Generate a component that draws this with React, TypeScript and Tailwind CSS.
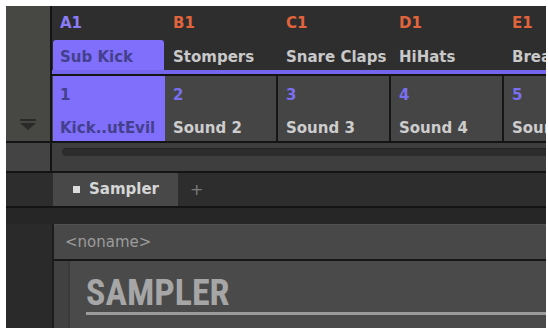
import React from "react"

const groups = [
  { letter: "A1", name: "Sub Kick", selected: true },
  { letter: "B1", name: "Stompers" },
  { letter: "C1", name: "Snare Claps" },
  { letter: "D1", name: "HiHats" },
  { letter: "E1", name: "Breaks" },
]

const sounds = [
  { num: "1", name: "Kick..utEvil", selected: true },
  { num: "2", name: "Sound 2" },
  { num: "3", name: "Sound 3" },
  { num: "4", name: "Sound 4" },
  { num: "5", name: "Sound 5" },
]

const ui = { fontFamily: '"DejaVu Sans", Verdana, sans-serif' }

export default function App() {
  return (
    <div className="min-h-screen bg-white pt-[6px] pl-[6px]" style={ui}>
      <div className="w-[540px] h-[322px] overflow-hidden flex flex-col bg-[#262626]">
        {/* Group + sound area */}
        <div className="flex h-[165px] shrink-0">
          {/* left strip */}
          <div className="w-[44px] shrink-0 flex flex-col">
            <div className="h-[135px] bg-[#474743] flex items-end justify-center pb-[10px]">
              <svg width="18" height="12" viewBox="0 0 18 12">
                <rect x="1" y="0" width="16" height="2" fill="#2a2a2a" />
                <path d="M1 4 H17 L9 11 Z" fill="#2a2a2a" />
              </svg>
            </div>
            <div className="h-[2px] bg-[#141414]" />
            <div className="flex-1 bg-[#444444]" />
          </div>
          <div className="w-[2px] shrink-0 bg-[#141414]" />

          <div className="flex-1 flex flex-col overflow-hidden">
            {/* groups */}
            <div className="h-[64px] bg-[#2e2e2e] flex pl-[1px]">
              {groups.map((g) => (
                <div key={g.letter} className="w-[113px] shrink-0 flex flex-col">
                  <div
                    className={`h-[34px] pl-[7px] pt-[10px] text-[15px] font-bold leading-none ${
                      g.selected ? "text-[#8a7cf6]" : "text-[#e2643c]"
                    }`}
                  >
                    {g.letter}
                  </div>
                  <div
                    className={`h-[30px] pl-[7px] pt-[10px] text-[15px] font-bold leading-none whitespace-nowrap ${
                      g.selected
                        ? "w-[111px] bg-[#7f6ffa] text-[#44408e] rounded-t-[3px]"
                        : "text-[#c9c9c9]"
                    }`}
                  >
                    {g.name}
                  </div>
                </div>
              ))}
            </div>
            <div className="h-[4px] bg-[#7566ee]" />
            <div className="h-[2px] bg-[#141414]" />

            {/* sounds */}
            <div className="h-[65px] flex pl-[1px] bg-[#454545]">
              {sounds.map((s) => (
                <div
                  key={s.num}
                  className={`shrink-0 flex flex-col pt-[12px] ${
                    s.selected
                      ? "w-[112px] bg-[#7f6ffa] pl-[7px]"
                      : "w-[113px] pl-[8px] border-r-2 border-[#161616]"
                  }`}
                >
                  <div
                    className={`text-[15px] font-bold leading-none ${
                      s.selected ? "text-[#44408e]" : "text-[#7a6ff0]"
                    }`}
                  >
                    {s.num}
                  </div>
                  <div
                    className={`mt-[18px] text-[15px] font-bold leading-none whitespace-nowrap ${
                      s.selected ? "text-[#44408e]" : "text-[#cdcdcd]"
                    }`}
                  >
                    {s.name}
                  </div>
                </div>
              ))}
            </div>
            <div className="h-[2px] bg-[#141414]" />

            {/* scroll bar */}
            <div className="flex-1 bg-[#3e3e3e] pt-[5px] pl-[10px]">
              <div className="h-[8px] rounded-l-[4px] bg-[#2c2c2c] border-t border-[#242424]" />
            </div>
          </div>
        </div>
        <div className="h-[2px] shrink-0 bg-[#141414]" />

        {/* tabs */}
        <div className="h-[33px] shrink-0 bg-[#2d2d2d] flex">
          <div className="w-[47px] shrink-0" />
          <div className="w-[125px] shrink-0 bg-[#484848] flex items-center pl-[20px]">
            <div className="w-[7px] h-[7px] bg-[#dcdcdc]" />
            <span className="ml-[9px] text-[15px] font-bold leading-none text-[#d6d6d6]">Sampler</span>
          </div>
          <div className="flex items-center pl-[12px] text-[16px] leading-none text-[#7c7c7c]">+</div>
        </div>
        <div className="h-[2px] shrink-0 bg-[#141414]" />
        <div className="h-[16px] shrink-0 bg-[#262626]" />

        {/* plugin area */}
        <div className="flex-1 flex">
          <div className="w-[46px] shrink-0 bg-[#2a2a2a]" />
          <div className="w-[2px] shrink-0 bg-[#1c1c1c]" />
          <div className="flex-1 flex flex-col">
            <div className="h-[35px] shrink-0 bg-[#484848] border-t border-[#525252] flex items-center pl-[11px]">
              <span className="text-[15px] leading-none text-[#9c9c9c]">&lt;noname&gt;</span>
            </div>
            <div className="h-[2px] shrink-0 bg-[#161616]" />
            <div className="flex-1 flex">
              <div className="w-[16px] shrink-0 bg-[#414141] border-r-2 border-[#3a3a3a]" />
              <div className="flex-1 bg-[#4a4a4a] pt-[14px] pl-[16px]">
                <div
                  className="text-[36px] font-bold leading-none text-[#a6a6a6]"
                  style={{ fontFamily: '"Liberation Sans Narrow", "Roboto Condensed", Roboto, sans-serif' }}
                >
                  SAMPLER
                </div>
                <div className="mt-[1px] h-[3px] bg-[#9b9b9b]" />
              </div>
            </div>
          </div>
        </div>
      </div>
    </div>
  )
}
